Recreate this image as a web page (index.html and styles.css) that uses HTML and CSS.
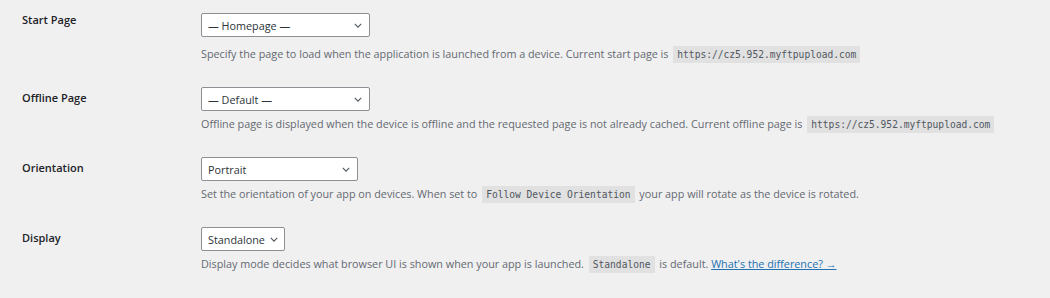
FILE: index.html
```html
<!DOCTYPE html>
<html lang="en">
<head>
    <meta charset="UTF-8">
    <title>PWA Settings</title>
    <link rel="stylesheet" href="styles.css">
</head>
<body>

    <div class="form-table">

        <!-- Start page -->
        <div class="row first">
            <div class="label">Start Page</div>
            <div class="field">
                <span class="select-wrap w-wide">
                    <select><option>— Homepage —</option></select>
                    <svg class="chev" viewBox="0 0 10 6"><path d="M1 1l4 4 4-4"/></svg>
                </span>
                <p class="desc">Specify the page to load when the application is launched from a device. Current start page is <code>https://cz5.952.myftpupload.com</code></p>
            </div>
        </div>

        <!-- Offline page -->
        <div class="row">
            <div class="label">Offline Page</div>
            <div class="field">
                <span class="select-wrap w-wide">
                    <select><option>— Default —</option></select>
                    <svg class="chev" viewBox="0 0 10 6"><path d="M1 1l4 4 4-4"/></svg>
                </span>
                <p class="desc">Offline page is displayed when the device is offline and the requested page is not already cached. Current offline page is <code>https://cz5.952.myftpupload.com</code></p>
            </div>
        </div>

        <!-- Orientation -->
        <div class="row">
            <div class="label">Orientation</div>
            <div class="field">
                <span class="select-wrap w-mid">
                    <select><option>Portrait</option></select>
                    <svg class="chev" viewBox="0 0 10 6"><path d="M1 1l4 4 4-4"/></svg>
                </span>
                <p class="desc">Set the orientation of your app on devices. When set to <code>Follow Device Orientation</code> your app will rotate as the device is rotated.</p>
            </div>
        </div>

        <!-- Display -->
        <div class="row">
            <div class="label">Display</div>
            <div class="field">
                <span class="select-wrap w-small">
                    <select><option>Standalone</option></select>
                    <svg class="chev" viewBox="0 0 10 6"><path d="M1 1l4 4 4-4"/></svg>
                </span>
                <p class="desc">Display mode decides what browser UI is shown when your app is launched. <code>Standalone</code> is default. <a href="#">What's the difference? &rarr;</a></p>
            </div>
        </div>

    </div>

</body>
</html>
```

FILE: styles.css
```css
/* Reset */
* {
    box-sizing: border-box;
    margin: 0;
    padding: 0;
}

body {
    font-family: 'Open Sans', 'Liberation Sans', sans-serif;
    font-size: 10.8px;
    background-color: #f0f0f1;
    color: #1d2327;
}

/* Settings table */
.form-table {
    padding-left: 22px;
}

.row {
    display: grid;
    grid-template-columns: 179px 1fr;
    padding: 8px 0 16px;
}

.row.first {
    padding-top: 13px;
}

.label {
    font-size: 11px;
    font-weight: 600;
    line-height: 18px;
    padding-top: 2px;
}

.row.first .label {
    margin-top: -4px;
}

/* Selects */
.select-wrap {
    position: relative;
    display: block;
    height: 24px;
}

.select-wrap select {
    appearance: none;
    -webkit-appearance: none;
    width: 100%;
    height: 24px;
    border: 1px solid #8c8f94;
    border-radius: 2px;
    background-color: #fff;
    color: #2c3338;
    font-family: inherit;
    font-size: 10.8px;
    padding: 0 18px 0 6px;
}

.select-wrap .chev {
    position: absolute;
    right: 8px;
    top: 10px;
    width: 8px;
    height: 5px;
    fill: none;
    stroke: #50575e;
    stroke-width: 1.4;
    pointer-events: none;
}

.w-wide { width: 169px; }
.w-mid { width: 157px; }
.w-small { width: 84px; }

.w-small select {
    padding-right: 14px;
}

.w-small .chev {
    right: 7px;
}

/* Descriptions */
.desc {
    color: #646970;
    line-height: 18px;
    height: 18px;
    margin-top: 4px;
}

.row.first .desc {
    margin-top: 8px;
}

.desc code {
    font-family: 'DejaVu Sans Mono', 'Liberation Mono', monospace;
    font-size: 9.6px;
    line-height: 1;
    color: #50575e;
    background-color: rgba(0, 0, 0, 0.06);
    padding: 3px 4px 3px;
    margin: 0 2px;
}

.desc a {
    color: #2271b1;
    text-decoration: underline;
}
```
